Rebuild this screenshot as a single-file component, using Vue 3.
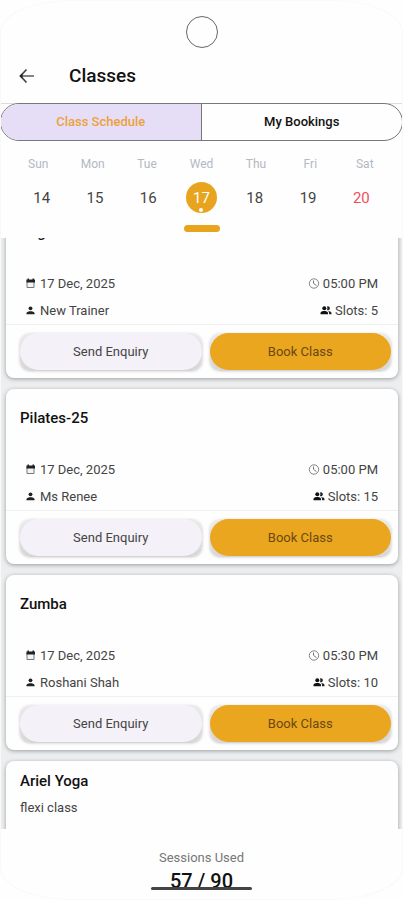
<script setup>
import { ref } from 'vue'

const days = [
  { name: 'Sun', date: 14 },
  { name: 'Mon', date: 15 },
  { name: 'Tue', date: 16 },
  { name: 'Wed', date: 17 },
  { name: 'Thu', date: 18 },
  { name: 'Fri', date: 19 },
  { name: 'Sat', date: 20, weekend: true },
]
const selected = ref(17)
const tab = ref('schedule')

const classes = [
  { title: 'Yoga', note: '', date: '17 Dec, 2025', time: '05:00 PM', trainer: 'New Trainer', slots: 5 },
  { title: 'Pilates-25', note: '', date: '17 Dec, 2025', time: '05:00 PM', trainer: 'Ms Renee', slots: 15 },
  { title: 'Zumba', note: '', date: '17 Dec, 2025', time: '05:30 PM', trainer: 'Roshani Shah', slots: 10 },
  { title: 'Ariel Yoga', note: 'flexi class' },
]
</script>

<template>
  <div class="screen">
    <div class="frame"></div>
    <div class="status"><span class="camera"></span></div>

    <header class="bar">
      <button class="back" type="button" aria-label="Back">
        <svg viewBox="0 0 16 16" width="16" height="16">
          <path d="M3 8H15" fill="none" stroke="#777" stroke-width="1.8" />
          <path d="M7.500 1.500L1.500 8L7.500 14.500" fill="none" stroke="#444" stroke-width="1.7" />
          <path d="M0.500 8L3.500 5.200V10.800z" fill="#222" />
        </svg>
      </button>
      <h1>Classes</h1>
    </header>

    <div class="tabline">
      <nav class="tabs">
        <button type="button" :class="{ on: tab === 'schedule' }" @click="tab = 'schedule'">Class Schedule</button>
        <button type="button" :class="{ on: tab === 'bookings' }" @click="tab = 'bookings'">My Bookings</button>
      </nav>
    </div>

    <section class="week">
      <div class="names">
        <span v-for="d in days" :key="d.name">{{ d.name }}</span>
      </div>
      <div class="dates">
        <button
          v-for="d in days"
          :key="d.date"
          type="button"
          :class="{ weekend: d.weekend, picked: d.date === selected }"
          @click="selected = d.date"
        >
          {{ d.date }}
        </button>
      </div>
      <div class="handle"></div>
    </section>

    <main class="list">
      <ul>
        <li v-for="c in classes" :key="c.title" class="card" :class="{ noted: c.note }">
          <h2>{{ c.title }}</h2>
          <p v-if="c.note" class="note">{{ c.note }}</p>
          <template v-if="c.date">
            <div class="info">
              <span class="item">
                <svg viewBox="0 0 12 12" width="12" height="12">
                  <path d="M2 2.500h7v7H2z" fill="#f4f4f4" stroke="#777" />
                  <path d="M1.500 1.500h8.500v3H1.500zM2.500 0.500h1.500v1.500H2.500zM7.500 0.500H9v1.500H7.500z" fill="#222" />
                </svg>
                {{ c.date }}
              </span>
              <span class="item">
                <svg viewBox="0 0 12 12" width="12" height="12">
                  <circle cx="6" cy="5.500" r="4.700" fill="none" stroke="#777" stroke-width="0.900" />
                  <path d="M5.500 2.500v2.800l3 2.400" fill="none" stroke="#666" stroke-width="0.900" />
                </svg>
                {{ c.time }}
              </span>
              <span class="item">
                <svg viewBox="0 0 12 12" width="12" height="12">
                  <circle cx="5.500" cy="3.300" r="1.900" fill="#222" />
                  <path d="M1.500 9.300V8.200C1.500 6.800 4 6.200 5.500 6.200S9.500 6.800 9.500 8.200V9.300z" fill="#222" />
                </svg>
                {{ c.trainer }}
              </span>
              <span class="item">
                <svg viewBox="0 0 12 12" width="12" height="12">
                  <circle cx="4.300" cy="3.300" r="2" fill="#111" />
                  <path d="M0.500 9.200V8C0.500 6.600 2.800 6 4.300 6S8 6.600 8 8V9.200z" fill="#111" />
                  <path d="M7 1.500a2 2 0 1 1 0 3.600q.8-1.800 0-3.600zM8 6.100c1.600.2 3.500.8 3.500 1.900v1.200H9V8c0-.8-.4-1.400-1-1.900z" fill="#222" />
                </svg>
                Slots: {{ c.slots }}
              </span>
            </div>
            <div class="actions">
              <span class="raised"><button type="button" class="enquiry">Send Enquiry</button></span>
              <span class="raised"><button type="button" class="book">Book Class</button></span>
            </div>
          </template>
        </li>
      </ul>
    </main>

    <footer class="usage">
      <span class="label">Sessions Used</span>
      <strong>57 / 90</strong>
      <span class="home"></span>
    </footer>
  </div>
</template>

<style>
body {
  margin: 0;
  background: #fefefe;
}
</style>

<style scoped>
.screen {
  position: relative;
  display: flex;
  flex-direction: column;
  height: 100vh;
  overflow: hidden;
  background: #fefefe;
  color: #111;
  font-family: Roboto, 'Liberation Sans', sans-serif;
  font-size: 13px;
}
button {
  padding: 0;
  border: 0;
  background: none;
  color: inherit;
  font: inherit;
  cursor: pointer;
}
.frame {
  position: absolute;
  inset: 0;
  border: 1px solid #f9f9f9;
  border-radius: 72px / 32px;
  pointer-events: none;
}
.status {
  display: flex;
  justify-content: center;
  padding-top: 16px;
}
.camera {
  box-sizing: border-box;
  width: 32px;
  height: 32px;
  border: 1px solid #666;
  border-radius: 50%;
}
.bar {
  display: flex;
  align-items: center;
  gap: 34px;
  height: 55px;
  padding: 0 19px;
}
.back {
  display: flex;
  width: 16px;
  height: 16px;
}
h1 {
  margin: 0;
  font-size: 19px;
  font-weight: 500;
}
.tabline {
  background: linear-gradient(#ddd, #ddd) top / 100% 1px no-repeat;
}
.tabs {
  display: grid;
  grid-template-columns: 1fr 1fr;
  height: 36px;
  overflow: hidden;
  border: 1px solid #777;
  border-radius: 19px;
  background: #fefefe;
}
.tabs button {
  padding-bottom: 2px;
  font-size: 13px;
  font-weight: 500;
}
.tabs .on {
  border-right: 1px solid #777;
  background: #e6def6;
  color: #eda13b;
}
.week {
  padding-top: 15px;
}
.names,
.dates {
  display: grid;
  grid-template-columns: repeat(7, 1fr);
  justify-items: center;
}
.names {
  padding: 0 11px;
  color: #b4b8c2;
  font-size: 12px;
  line-height: 16px;
}
.dates {
  padding: 10px 15px 0;
}
.dates button {
  position: relative;
  width: 31px;
  height: 31px;
  border-radius: 50%;
  color: #444;
  font-size: 15px;
}
.dates .weekend {
  color: #f0505c;
}
.dates .picked {
  background: #e9a41f;
  color: #fff;
}
.dates .picked::after {
  content: '';
  position: absolute;
  left: 50%;
  bottom: 1px;
  width: 4px;
  height: 4px;
  margin-left: -2px;
  border-radius: 50%;
  background: #fff;
}
.handle {
  width: 36px;
  height: 7px;
  margin: 12px auto 6px;
  border-radius: 4px;
  background: #e9a41f;
}
.list {
  flex: 1;
  min-height: 0;
  overflow: hidden;
  background: #eceeef;
}
.list ul {
  display: grid;
  gap: 11px;
  margin: -35px 0 0;
  padding: 0 5px 0 6px;
  list-style: none;
}
.card {
  min-height: 170px;
  border-radius: 8px;
  background: #fefefe;
  box-shadow: 0 1px 4px rgba(0, 0, 0, 0.35);
}
h2 {
  margin: 0;
  padding: 19px 14px 0;
  font-size: 15px;
  font-weight: 500;
  line-height: 20px;
}
.noted h2 {
  padding-top: 10px;
}
.note {
  margin: 0;
  padding: 8px 14px;
  color: #444;
  line-height: 18px;
}
.info {
  display: grid;
  grid-template-columns: 1fr auto;
  row-gap: 9px;
  padding: 33px 20px 4px 19px;
  color: #444;
  line-height: 18px;
}
.item {
  display: flex;
  align-items: center;
  gap: 3px;
}
.item:nth-child(even) {
  justify-content: flex-end;
}
.actions {
  display: grid;
  grid-template-columns: 1fr 1fr;
  gap: 8px;
  padding: 8px 7px 8px 14px;
  border-top: 1px solid #f0f0f0;
}
.raised {
  display: flex;
  border-radius: 10px;
  background: linear-gradient(#ececec, #d6d6d6);
  box-shadow: 0 1px 3px rgba(0, 0, 0, 0.25);
}
.raised button {
  flex: 1;
  height: 37px;
  border-radius: 19px;
}
.enquiry {
  background: #f4f1f8;
  color: #444;
}
.book {
  background: #eba620;
  color: #6b4810;
}
.usage {
  position: relative;
  display: flex;
  flex-direction: column;
  align-items: center;
  padding: 20px 0 4px;
}
.label {
  color: #777;
  line-height: 18px;
}
.usage strong {
  font-size: 20px;
  font-weight: 500;
  line-height: 29px;
}
.home {
  position: absolute;
  bottom: 10px;
  left: 50%;
  width: 101px;
  height: 3px;
  margin-left: -51px;
  border-radius: 2px;
  background: #444;
}
</style>
